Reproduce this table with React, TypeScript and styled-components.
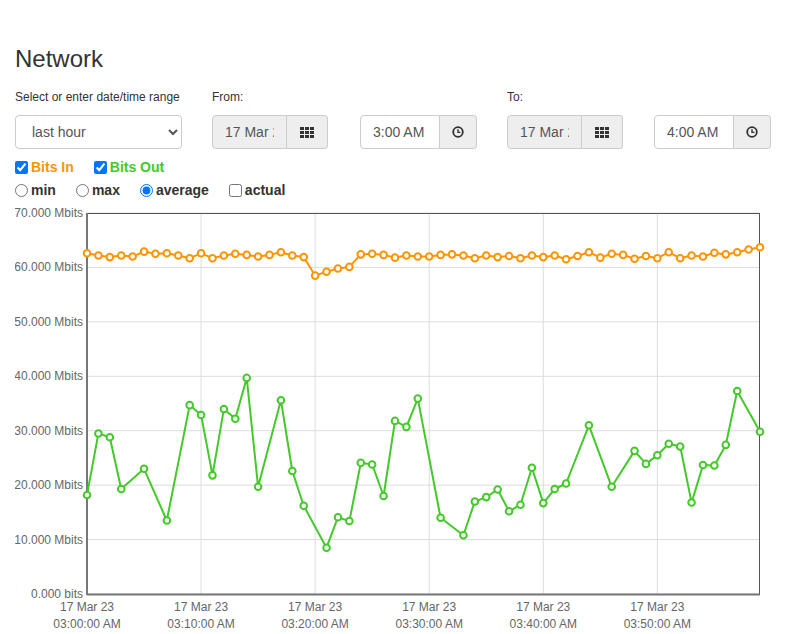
import React from "react";
import styled, { createGlobalStyle } from "styled-components";

const colours = {
    text: "#333",
    inputText: "#555",
    border: "#ccc",
    addon: "#eee",
    bitsIn: "#ff9400",
    bitsOut: "#44c92a",
    grid: "#dcdcdc",
    axis: "#666"
};

const GlobalStyle =
  createGlobalStyle`
  body {
    margin: 0;
    background: #fff;
    font-family: "Liberation Sans", Arial, Helvetica, sans-serif;
    color: ${colours.text};
  }
  `;

const Page =
  styled.div`
  padding: 46px 15px 0;
  `;

const Title =
  styled.h1`
  margin: 0;
  font-size: 24px;
  font-weight: 500;
  line-height: 1.1;
  `;

const RangeGrid =
  styled.div`
  display: grid;
  grid-template-columns: 167px 265px 264px;
  column-gap: 30px;
  margin-top: 17px;
  `;

const FieldLabel =
  styled.label`
  display: block;
  font-size: 12px;
  line-height: 17px;
  margin-bottom: 9px;
  `;

const RangeSelect =
  styled.select`
  width: 100%;
  height: 34px;
  box-sizing: border-box;
  padding: 6px 12px;
  font-family: inherit;
  font-size: 14px;
  color: ${colours.inputText};
  background: #fff;
  border: 1px solid ${colours.border};
  border-radius: 4px;
  `;

const PickerRow =
  styled.div`
  display: flex;
  justify-content: space-between;
  `;

const InputGroup =
  styled.div`
  display: flex;
  height: 34px;
  `;

interface FieldProps {
  width: number
  readOnlyLook?: boolean
}

const GroupInput =
  styled.input<FieldProps>`
  width: ${props => props.width}px;
  height: 34px;
  box-sizing: border-box;
  margin: 0;
  padding: 6px 12px;
  font-family: inherit;
  font-size: 14px;
  color: ${colours.inputText};
  background: ${props => props.readOnlyLook ? colours.addon : "#fff"};
  border: 1px solid ${colours.border};
  border-radius: 4px 0 0 4px;
  outline: none;
  `;

const AddonButton =
  styled.button<FieldProps>`
  width: ${props => props.width}px;
  height: 34px;
  box-sizing: border-box;
  margin: 0;
  padding: 0;
  display: flex;
  align-items: center;
  justify-content: center;
  background: ${colours.addon};
  border: 1px solid ${colours.border};
  border-left: none;
  border-radius: 0 4px 4px 0;
  `;

const OptionRow =
  styled.div`
  display: flex;
  align-items: center;
  height: 20px;
  margin-top: ${(props: { gap: number }) => props.gap}px;
  `;

const Option =
  styled.label<{ colour?: string }>`
  display: flex;
  align-items: center;
  margin-right: 20px;
  font-size: 14px;
  font-weight: bold;
  line-height: 20px;
  color: ${props => props.colour || colours.text};

  input {
    width: 13px;
    height: 13px;
    margin: 0 3px 0 0;
  }
  `;

const ChartSvg =
  styled.svg`
  display: block;
  margin-top: 3px;
  font-family: "Liberation Sans", Arial, sans-serif;
  font-size: 12px;
  `;

const GridIcon = () => (
    <svg width="14" height="11" viewBox="0 0 14 11">
        {[0, 5, 10].map(x =>
            [0, 4, 8].map(y =>
                <rect key={`${x}-${y}`} x={x} y={y} width="4" height="3" fill="#333"/>))}
    </svg>
);

const ClockIcon = () => (
    <svg width="12" height="12" viewBox="0 0 12 12">
        <circle cx="6" cy="6" r="4.8" fill="none" stroke="#333" strokeWidth="1.8"/>
        <path d="M6 3.2V6.4H8.4" fill="none" stroke="#333" strokeWidth="1.4"/>
    </svg>
);

const DatePicker = ({ value }: { value: string }) => (
    <InputGroup>
        <GroupInput width={75} readOnlyLook readOnly value={value}/>
        <AddonButton width={41}><GridIcon/></AddonButton>
    </InputGroup>
);

const TimePicker = ({ value }: { value: string }) => (
    <InputGroup>
        <GroupInput width={80} readOnly value={value}/>
        <AddonButton width={37}><ClockIcon/></AddonButton>
    </InputGroup>
);

// Mbits per minute, 03:00 .. 03:59
const bitsIn = [
    62.6, 62.2, 61.9, 62.2, 62.0, 62.9, 62.5, 62.6, 62.2, 61.7,
    62.6, 61.7, 62.2, 62.5, 62.3, 62.0, 62.3, 62.8, 62.2, 61.9,
    58.5, 59.2, 59.8, 60.1, 62.4, 62.5, 62.3, 61.8, 62.2, 62.0,
    62.0, 62.3, 62.4, 62.2, 61.7, 62.2, 61.9, 62.1, 61.7, 62.2,
    61.9, 62.2, 61.5, 62.1, 62.8, 61.8, 62.5, 62.3, 61.6, 62.1,
    61.7, 62.8, 61.7, 62.2, 62.0, 62.7, 62.4, 62.8, 63.3, 63.7
].map((v, i): [number, number] => [i, v]);

const bitsOut: [number, number][] = [
    [0, 18.2], [1, 29.5], [2, 28.8], [3, 19.3], [5, 23.0], [7, 13.5],
    [9, 34.7], [10, 32.9], [11, 21.8], [12, 34.0], [13, 32.2], [14, 39.7],
    [15, 19.7], [17, 35.6], [18, 22.6], [19, 16.2], [21, 8.5], [22, 14.1],
    [23, 13.4], [24, 24.1], [25, 23.8], [26, 18.0], [27, 31.8], [28, 30.7],
    [29, 35.9], [31, 14.0], [33, 10.8], [34, 17.0], [35, 17.8], [36, 19.2],
    [37, 15.2], [38, 16.4], [39, 23.2], [40, 16.7], [41, 19.3], [42, 20.3],
    [44, 31.0], [46, 19.7], [48, 26.3], [49, 23.9], [50, 25.5], [51, 27.6],
    [52, 27.1], [53, 16.8], [54, 23.7], [55, 23.6], [56, 27.4], [57, 37.3],
    [59, 29.8]
];

const plot = { left: 72, right: 745, top: 10, bottom: 391 };
const xAt = (m: number) => plot.left + (m / 59) * (plot.right - plot.left);
const yAt = (v: number) => plot.bottom - (v / 70) * (plot.bottom - plot.top);

const yTicks = [0, 10, 20, 30, 40, 50, 60, 70];
const xTicks = ["03:00:00 AM", "03:10:00 AM", "03:20:00 AM", "03:30:00 AM", "03:40:00 AM", "03:50:00 AM"];

const Series = ({ points, colour }: { points: [number, number][], colour: string }) => {
    const d = points.map(([m, v], i) => `${i ? "L" : "M"}${xAt(m).toFixed(1)} ${yAt(v).toFixed(1)}`).join(" ");
    return (
        <g>
            <path d={d} fill="none" stroke={colour} strokeWidth="2" strokeLinejoin="round"/>
            {points.map(([m, v]) =>
                <circle key={m} cx={xAt(m)} cy={yAt(v)} r="3.3" fill="#fff" stroke={colour} strokeWidth="2"/>)}
        </g>
    );
};

const NetworkChart = () => (
    <ChartSvg width="757" height="430" viewBox="0 0 757 430">
        {yTicks.map(t =>
            <g key={t}>
                <line x1={plot.left} x2={plot.right} y1={yAt(t)} y2={yAt(t)} stroke={colours.grid}/>
                <text x={plot.left - 4} y={yAt(t) + 4} textAnchor="end" fill={colours.axis}>
                    {t === 0 ? "0.000 bits" : `${t}.000 Mbits`}
                </text>
            </g>)}
        {xTicks.map((t, i) =>
            <g key={t}>
                <line x1={xAt(i * 10)} x2={xAt(i * 10)} y1={plot.top} y2={plot.bottom} stroke={colours.grid}/>
                <text x={xAt(i * 10)} y={408} textAnchor="middle" fill={colours.axis}>17 Mar 23</text>
                <text x={xAt(i * 10)} y={425} textAnchor="middle" fill={colours.axis}>{t}</text>
            </g>)}
        <rect x={plot.left + 0.5} y={plot.top + 0.5} width={plot.right - plot.left - 1} height={plot.bottom - plot.top}
            fill="none" stroke="#555"/>
        <line x1={plot.left} x2={plot.left} y1={plot.top} y2={plot.bottom + 1} stroke="#777" strokeWidth="2"/>
        <line x1={plot.left} x2={plot.right} y1={plot.bottom + 0.5} y2={plot.bottom + 0.5} stroke="#777" strokeWidth="2"/>
        <Series points={bitsIn} colour={colours.bitsIn}/>
        <Series points={bitsOut} colour={colours.bitsOut}/>
    </ChartSvg>
);

const App = () => (
    <Page>
        <GlobalStyle/>
        <Title>Network</Title>
        <RangeGrid>
            <div>
                <FieldLabel>Select or enter date/time range</FieldLabel>
                <RangeSelect defaultValue="hour">
                    <option value="hour">last hour</option>
                    <option value="day">last day</option>
                    <option value="week">last week</option>
                </RangeSelect>
            </div>
            <div>
                <FieldLabel>From:</FieldLabel>
                <PickerRow>
                    <DatePicker value="17 Mar 2023"/>
                    <TimePicker value="3:00 AM"/>
                </PickerRow>
            </div>
            <div>
                <FieldLabel>To:</FieldLabel>
                <PickerRow>
                    <DatePicker value="17 Mar 2023"/>
                    <TimePicker value="4:00 AM"/>
                </PickerRow>
            </div>
        </RangeGrid>
        <OptionRow gap={8}>
            <Option colour={colours.bitsIn}><input type="checkbox" defaultChecked/>Bits In</Option>
            <Option colour={colours.bitsOut}><input type="checkbox" defaultChecked/>Bits Out</Option>
        </OptionRow>
        <OptionRow gap={3}>
            <Option><input type="radio" name="agg"/>min</Option>
            <Option><input type="radio" name="agg"/>max</Option>
            <Option><input type="radio" name="agg" defaultChecked/>average</Option>
            <Option><input type="checkbox"/>actual</Option>
        </OptionRow>
        <NetworkChart/>
    </Page>
);

export default App;
